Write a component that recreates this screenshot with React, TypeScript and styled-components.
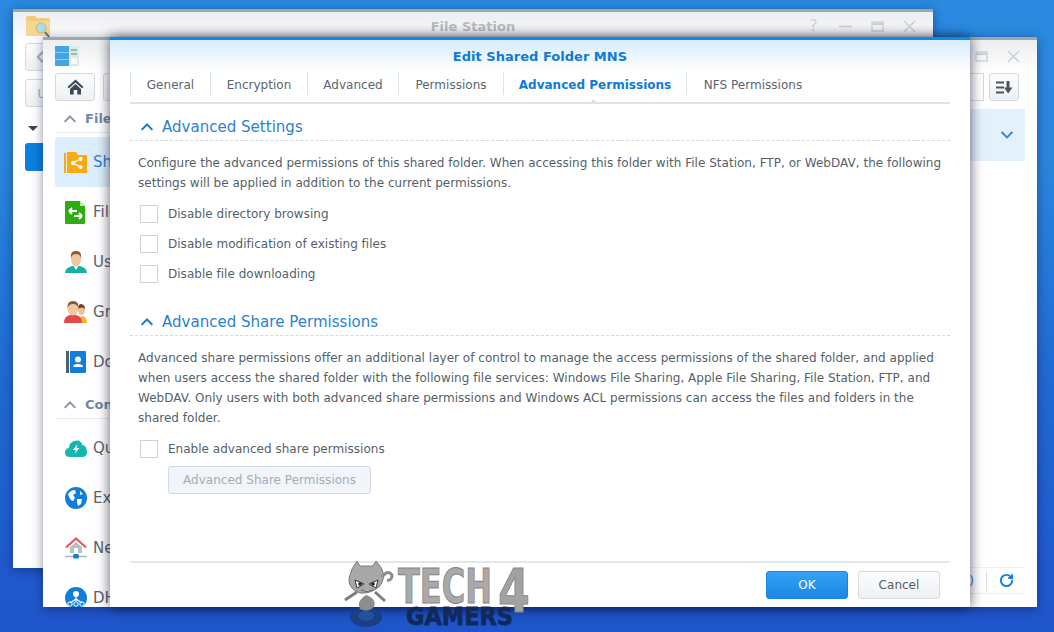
import React from 'react';
import styled, { createGlobalStyle } from 'styled-components';
import { RotateCw, ChevronLeft } from 'lucide-react';

const Global = createGlobalStyle`
  html, body {
    margin: 0;
    padding: 0;
    width: 1054px;
    height: 632px;
    overflow: hidden;
  }
  * { box-sizing: border-box; }
`;

const Desktop = styled.div`
  position: relative;
  width: 1054px;
  height: 632px;
  overflow: hidden;
  background: linear-gradient(180deg, #2a8ae0 0%, #2a86dd 25%, #1f6ad3 60%, #1f55cb 100%);
  font-family: 'DejaVu Sans', Verdana, sans-serif;
  font-size: 12px;
  letter-spacing: 0.02px;
  color: #555f69;
`;

const Window = styled.div<{ $x: number; $y: number; $w: number; $h: number }>`
  position: absolute;
  left: ${(p) => p.$x}px;
  top: ${(p) => p.$y}px;
  width: ${(p) => p.$w}px;
  height: ${(p) => p.$h}px;
  background: #fff;
  border-top: 3px solid #a1a6ab;
  box-shadow: 0 2px 10px rgba(0, 20, 60, 0.45);
  overflow: hidden;
  display: flex;
  flex-direction: column;
`;

const TitleBar = styled.div<{ $compact?: boolean }>`
  height: ${(p) => (p.$compact ? 31 : 32)}px;
  flex-shrink: 0;
  display: flex;
  align-items: center;
  position: relative;
  padding: 0 17px ${(p) => (p.$compact ? 3 : 0)}px 12px;
  background: linear-gradient(180deg, #ebedf0, #ffffff);
`;

const WindowTitle = styled.div`
  position: absolute;
  left: 0;
  right: 0;
  text-align: center;
  font-size: 13px;
  font-weight: bold;
  color: #b9bdc1;
`;

const WindowControls = styled.div`
  margin-left: auto;
  display: flex;
  align-items: center;
  gap: 19px;
  color: #cfd2d5;
`;

const HelpGlyph = styled.span`
  width: 13px;
  text-align: center;
  font-size: 15px;
  line-height: 15px;
`;

const Toolbar = styled.div`
  display: flex;
  align-items: center;
  gap: 8px;
  margin-top: 1px;
  padding: 0 18px 0 12px;
  height: 28px;
`;

const ToolButton = styled.div<{ $w: number }>`
  width: ${(p) => p.$w}px;
  height: 28px;
  flex-shrink: 0;
  display: flex;
  align-items: center;
  justify-content: center;
  border: 1px solid #d3d9df;
  border-radius: 3px;
  background: linear-gradient(180deg, #fbfcfd, #eef1f4);
  color: #aab0b6;
  font-size: 13px;
`;

const SearchBox = styled.div`
  width: 30px;
  height: 28px;
  margin-left: auto;
  margin-right: -3px;
  border: 1px solid #d3d9df;
  background: #fff;
`;

const BackBody = styled.div`
  padding: 0 12px;
  display: flex;
  flex-direction: column;
  gap: 8px;
`;

const Caret = styled.div`
  width: 0;
  height: 0;
  margin: 11px 0 0 3px;
  border-left: 5px solid transparent;
  border-right: 5px solid transparent;
  border-top: 5px solid #444;
`;

const BlueBlock = styled.div`
  width: 60px;
  height: 28px;
  margin-top: 4px;
  border-radius: 3px;
  background: #0c7fe0;
`;

const ManagerBody = styled.div`
  flex: 1;
  min-height: 0;
  display: flex;
`;

const Sidebar = styled.div`
  width: 67px;
  flex-shrink: 0;
  padding-left: 12px;
  overflow: hidden;
`;

const SectionLabel = styled.div`
  width: 200px;
  height: 28px;
  display: flex;
  align-items: center;
  gap: 8px;
  padding-left: 8px;
  margin: 4px 0;
  border-bottom: 1px solid #e8ebee;
  font-size: 13px;
  font-weight: bold;
  color: #6f8aa6;
  white-space: nowrap;
`;

const SideRow = styled.div<{ $active?: boolean }>`
  width: 200px;
  height: 50px;
  display: flex;
  align-items: center;
  gap: 6px;
  padding-left: 9px;
  background: ${(p) => (p.$active ? '#dcedfb' : 'transparent')};
  border-radius: 3px 0 0 3px;
  font-size: 15px;
  color: ${(p) => (p.$active ? '#2b7fd4' : '#5b6570')};
  white-space: nowrap;
`;

const IconSlot = styled.span`
  width: 23px;
  height: 23px;
  flex-shrink: 0;
  display: flex;
  align-items: center;
  justify-content: center;
`;

const ManagerMain = styled.div`
  flex: 1;
  display: flex;
  flex-direction: column;
  padding: 8px 12px 0 0;
`;

const ListRow = styled.div`
  height: 52px;
  display: flex;
  align-items: center;
  justify-content: flex-end;
  padding-right: 11px;
  background: #e3f1fc;
`;

const StatusBar = styled.div`
  margin-top: auto;
  margin-bottom: 13px;
  height: 27px;
  display: flex;
  align-items: center;
  justify-content: flex-end;
  gap: 12px;
  padding-right: 11px;
  border-top: 1px solid #eef0f2;
  border-bottom: 1px solid #eef0f2;
  color: #2b7fd4;
`;

const StatusDivider = styled.div`
  width: 1px;
  height: 20px;
  background: #dfe3e7;
`;

const Dialog = styled.div`
  position: absolute;
  left: 110px;
  top: 37px;
  width: 860px;
  height: 570px;
  padding: 0 20px 8px;
  display: flex;
  flex-direction: column;
  border-top: 3px solid #1089e2;
  background: linear-gradient(180deg, #d6ecfb 0, #ffffff 32px);
  box-shadow: 0 0 12px rgba(0, 5, 30, 0.65);
`;

const DialogTitle = styled.div`
  height: 32px;
  flex-shrink: 0;
  display: flex;
  align-items: center;
  justify-content: center;
  font-size: 13px;
  font-weight: bold;
  color: #0f7bd5;
`;

const Tabs = styled.div`
  height: 32px;
  flex-shrink: 0;
  display: flex;
  padding-bottom: 7px;
  border-bottom: 2px solid #dfe2e5;
  position: relative;
`;

const Tab = styled.div<{ $w: number; $active?: boolean }>`
  width: ${(p) => p.$w}px;
  padding-top: 3px;
  display: flex;
  align-items: center;
  justify-content: center;
  border-left: 1px solid #dfe3e6;
  color: ${(p) => (p.$active ? '#0f7bd5' : '#5b6570')};
  font-weight: ${(p) => (p.$active ? 'bold' : 'normal')};
  white-space: nowrap;
  &:last-of-type {
    border-right: 1px solid #dfe3e6;
  }
`;

const TabNotch = styled.div`
  position: absolute;
  left: 459px;
  bottom: -2px;
  width: 9px;
  height: 5px;
  background: #dfe2e5;
  clip-path: polygon(50% 0, 100% 100%, 0 100%);
`;

const SectionHeader = styled.div<{ $top: number }>`
  height: 30px;
  margin-top: ${(p) => p.$top}px;
  padding: 2px 0 0 10px;
  flex-shrink: 0;
  display: flex;
  align-items: center;
  gap: 8px;
  border-bottom: 1px dashed #d5d9dd;
  font-size: 15px;
  color: #2b7fd4;
`;

const Paragraph = styled.p<{ $after: number }>`
  margin: 12px 0 ${(p) => p.$after}px;
  padding: 0 8px;
  line-height: 20px;
  color: #555f69;
`;

const CheckRow = styled.label`
  height: 30px;
  display: flex;
  align-items: center;
  gap: 10px;
  padding-left: 10px;
`;

const Box = styled.span`
  width: 18px;
  height: 18px;
  border: 1px solid #ccd2d7;
  background: #fff;
`;

const DisabledButton = styled.div`
  width: 203px;
  height: 28px;
  margin: 2px 0 0 38px;
  display: flex;
  align-items: center;
  justify-content: center;
  border: 1px solid #d3dce4;
  border-radius: 3px;
  background: #f1f5f9;
  color: #a5acb3;
`;

const Footer = styled.div`
  margin-top: auto;
  height: 38px;
  flex-shrink: 0;
  display: flex;
  justify-content: flex-end;
  align-items: flex-end;
  gap: 10px;
  padding-right: 10px;
  border-top: 2px solid #e4e6e8;
`;

const ActionButton = styled.div<{ $primary?: boolean }>`
  width: 82px;
  height: 28px;
  display: flex;
  align-items: center;
  justify-content: center;
  border-radius: 3px;
  border: 1px solid ${(p) => (p.$primary ? '#1a84de' : '#d3d9df')};
  background: ${(p) =>
    p.$primary ? 'linear-gradient(180deg, #32a3f5, #1a87e4)' : 'linear-gradient(180deg, #fbfcfd, #eef1f4)'};
  color: ${(p) => (p.$primary ? '#fff' : '#555f69')};
`;

const Watermark = styled.svg`
  position: absolute;
  left: 340px;
  top: 555px;
`;

const Chevron = ({ up = true, color = '#1a78c8', size = 14 }: { up?: boolean; color?: string; size?: number }) => (
  <svg width={size} height={size * 0.7} viewBox="0 0 14 10">
    <path d={up ? 'M1.5 8 L7 2.5 L12.5 8' : 'M1.5 2 L7 7.5 L12.5 2'} fill="none" stroke={color} strokeWidth="2" />
  </svg>
);

const CloseGlyph = () => (
  <svg width="13" height="13" viewBox="0 0 13 13">
    <path d="M1 1 L12 12 M12 1 L1 12" stroke="currentColor" strokeWidth="1.6" />
  </svg>
);

const MinGlyph = () => (
  <svg width="13" height="13" viewBox="0 0 13 13">
    <path d="M0 6.5 H13" stroke="currentColor" strokeWidth="1.6" />
  </svg>
);

const MaxGlyph = () => (
  <svg width="13" height="11" viewBox="0 0 13 11">
    <rect x="1" y="1" width="11" height="9" fill="none" stroke="currentColor" strokeWidth="1.4" />
    <path d="M1 3 H12" stroke="currentColor" strokeWidth="2" />
  </svg>
);

const FolderSearchIcon = () => (
  <svg width="26" height="24" viewBox="0 0 26 24">
    <path d="M1 4 Q1 2 3 2 H10 L12 4 H23 Q25 4 25 6 V22 H1 Z" fill="#f0cb7c" />
    <path d="M1 7 H25 V22 H1 Z" fill="#f6d78f" />
    <circle cx="16" cy="14" r="5" fill="#a9dcef" stroke="#d8b468" strokeWidth="1" />
    <path d="M20 18 L24 23" stroke="#6a6a6a" strokeWidth="2" />
  </svg>
);

const ControlPanelIcon = () => (
  <svg width="24" height="20" viewBox="0 0 24 20">
    <rect x="0" y="0" width="14" height="20" fill="#44a5e5" />
    <path d="M0 6.5 H14 M0 13.5 H14" stroke="#8fcbf0" strokeWidth="1" />
    <rect x="14" y="0" width="10" height="20" fill="#dfe7ea" />
    <path d="M16 4 H22 M16 8 H22" stroke="#6fb7a5" strokeWidth="1.5" />
    <rect x="16" y="12" width="6" height="6" fill="#f8f8f8" />
  </svg>
);

const HomeIcon = () => (
  <svg width="17" height="16" viewBox="0 0 17 16">
    <path d="M8.5 0.5 L0.5 8 L2 9.3 L8.5 3.4 L15 9.3 L16.5 8 Z" fill="#3f4953" />
    <path d="M3 10 L8.5 5 L14 10 V15.5 H10.3 V11 H6.7 V15.5 H3 Z" fill="#3f4953" />
  </svg>
);

const SortIcon = () => (
  <svg width="17" height="13" viewBox="0 0 17 13">
    <path d="M0 1.5 H8 M0 6.5 H8 M0 11.5 H8" stroke="#4b555f" strokeWidth="2" />
    <path d="M12 0 V7" stroke="#4b555f" strokeWidth="3" />
    <path d="M8 6.5 H16.5 L12.2 12.5 Z" fill="#4b555f" />
  </svg>
);

const SharedFolderIcon = () => (
  <svg width="23" height="21" viewBox="0 0 23 21">
    <path d="M0 1 H2 V21 H0 Z M3 0 H12 L14 3 H23 V21 H3 Z" fill="#fba90f" />
    <path d="M9 11 L16 7 M9 11 L16 15" stroke="#fff" strokeWidth="1.4" />
    <circle cx="9" cy="11" r="2.2" fill="#fff" />
    <circle cx="16.5" cy="7" r="2" fill="#fff" />
    <circle cx="16.5" cy="15" r="2" fill="#fff" />
  </svg>
);

const FileServicesIcon = () => (
  <svg width="21" height="23" viewBox="0 0 21 23">
    <path d="M1 0 H15 L20 5 V22 Q20 23 19 23 H1 Q0 23 0 22 V1 Q0 0 1 0 Z" fill="#2ead13" />
    <path d="M15 0 L20 5 H15 Z" fill="#c7ecbb" />
    <path d="M4 10 H12 M4 10 L7 7 M4 10 L7 13 M17 15 H9 M17 15 L14 12 M17 15 L14 18" stroke="#fff" strokeWidth="1.8" fill="none" />
  </svg>
);

const UserIcon = () => (
  <svg width="22" height="22" viewBox="0 0 22 22">
    <path d="M0 22 Q0 17 7 15 H15 Q22 17 22 22 Z" fill="#17b0a5" />
    <path d="M8 14 L11 19 L14 14 Z" fill="#fff" />
    <ellipse cx="11" cy="8" rx="5" ry="7.5" fill="#f2c6a0" />
    <path d="M6 7 Q5 0 11 0 Q17 0 16 7 Q15 3 11 3 Q7 3 6 7 Z" fill="#8a5a34" />
  </svg>
);

const GroupIcon = () => (
  <svg width="23" height="22" viewBox="0 0 23 22">
    <path d="M15 22 Q15 15 19 15 Q23 17 23 22 Z" fill="#f0b429" />
    <ellipse cx="17.5" cy="9" rx="3.5" ry="5" fill="#efc09a" />
    <path d="M14 8 Q14 3 17.5 3 Q21 4 21 8 Q18 5 14 8 Z" fill="#6a4426" />
    <path d="M0 22 Q0 15 6 14 H12 Q18 15 18 22 Z" fill="#e6474c" />
    <ellipse cx="9" cy="7.5" rx="5.5" ry="7" fill="#f2c6a0" />
    <path d="M3.5 7 Q3 0 9 0 Q15 0 14.5 7 Q13 3 9 3 Q5 3 3.5 7 Z" fill="#8a5a34" />
  </svg>
);

const DomainIcon = () => (
  <svg width="20" height="22" viewBox="0 0 20 22">
    <rect x="0" y="0" width="3" height="22" fill="#4c5f70" />
    <rect x="4" y="0" width="16" height="22" rx="1" fill="#0f7fdb" />
    <circle cx="12" cy="8.5" r="3" fill="#fff" />
    <path d="M7 16 Q7 13 12 13 Q17 13 17 16 Z" fill="#fff" />
  </svg>
);

const QuickConnectIcon = () => (
  <svg width="22" height="19" viewBox="0 0 22 19">
    <path d="M5 18 Q0 18 0 13.5 Q0 9.5 4 9 Q4 3.5 9.5 2 Q15 0 17.5 6 Q22 7 22 13 Q22 18 17 18 Z" fill="#13b7b0" />
    <path d="M12.5 5 L8 11 H11 L9.5 15 L14.5 9 H11.5 Z" fill="#fff" />
  </svg>
);

const GlobeIcon = () => (
  <svg width="22" height="22" viewBox="0 0 22 22">
    <circle cx="11" cy="11" r="11" fill="#0f7fdb" />
    <path d="M3 7 Q6 3 10 3 L11 6 L8 8 L10 11 L8 14 L6 13 L4 10 Z M12 12 L17 12 L16 17 L13 19 L12 15 Z M15 4 L18 7 L15 8 Z" fill="#fff" />
  </svg>
);

const NetworkIcon = () => (
  <svg width="22" height="22" viewBox="0 0 22 22">
    <path d="M11 0 L22 10 L20 11 L11 3 L2 11 L0 10 Z" fill="#e9585a" />
    <path d="M5 10 L11 5 L17 10 V16 H5 Z" fill="#b7bfc7" />
    <rect x="9" y="11" width="4" height="5" fill="#fff" />
    <path d="M0 19.5 H22" stroke="#a9b6c2" strokeWidth="1.4" />
    <rect x="8" y="17" width="6" height="4.5" rx="1.5" fill="#0f7fdb" />
  </svg>
);

const DhcpIcon = () => (
  <svg width="22" height="22" viewBox="0 0 22 22">
    <circle cx="11" cy="11" r="11" fill="#0f7fdb" />
    <circle cx="11" cy="7" r="3" fill="#fff" />
    <path d="M11 9 V14 M5 16 L11 12 L17 16" stroke="#fff" strokeWidth="1.2" fill="none" />
    <circle cx="5" cy="17" r="2.2" fill="none" stroke="#fff" />
    <circle cx="11" cy="17" r="2.2" fill="none" stroke="#fff" />
    <circle cx="17" cy="17" r="2.2" fill="none" stroke="#fff" />
  </svg>
);

const sideTop = [
  { label: 'Shared Folder', icon: <SharedFolderIcon />, active: true },
  { label: 'File Services', icon: <FileServicesIcon /> },
  { label: 'User', icon: <UserIcon /> },
  { label: 'Group', icon: <GroupIcon /> },
  { label: 'Domain/LDAP', icon: <DomainIcon /> },
];

const sideBottom = [
  { label: 'QuickConnect', icon: <QuickConnectIcon /> },
  { label: 'External Access', icon: <GlobeIcon /> },
  { label: 'Network', icon: <NetworkIcon /> },
  { label: 'DHCP Server', icon: <DhcpIcon /> },
];

const tabs = [
  { label: 'General', w: 80 },
  { label: 'Encryption', w: 97 },
  { label: 'Advanced', w: 91 },
  { label: 'Permissions', w: 105 },
  { label: 'Advanced Permissions', w: 183, active: true },
  { label: 'NFS Permissions', w: 133 },
];

const App = () => {
  return (
    <Desktop>
      <Global />

      <Window $x={13} $y={9} $w={920} $h={559}>
        <TitleBar $compact>
          <FolderSearchIcon />
          <WindowTitle>File Station</WindowTitle>
          <WindowControls>
            <HelpGlyph>?</HelpGlyph>
            <MinGlyph />
            <MaxGlyph />
            <CloseGlyph />
          </WindowControls>
        </TitleBar>
        <BackBody>
          <ToolButton $w={30}>
            <ChevronLeft size={18} strokeWidth={3} />
          </ToolButton>
          <ToolButton $w={34}>U</ToolButton>
          <Caret />
          <BlueBlock />
        </BackBody>
      </Window>

      <Window $x={43} $y={37} $w={994} $h={570}>
        <TitleBar>
          <ControlPanelIcon />
          <WindowControls>
            <MaxGlyph />
            <CloseGlyph />
          </WindowControls>
        </TitleBar>
        <Toolbar>
          <ToolButton $w={40}>
            <HomeIcon />
          </ToolButton>
          <ToolButton $w={40} />
          <SearchBox />
          <ToolButton $w={30}>
            <SortIcon />
          </ToolButton>
        </Toolbar>
        <ManagerBody>
          <Sidebar>
            <SectionLabel>
              <Chevron color="#8a97a5" />
              File Sharing
            </SectionLabel>
            {sideTop.map((row) => (
              <SideRow key={row.label} $active={row.active}>
                <IconSlot>{row.icon}</IconSlot>
                {row.label}
              </SideRow>
            ))}
            <SectionLabel>
              <Chevron color="#8a97a5" />
              Connectivity
            </SectionLabel>
            {sideBottom.map((row) => (
              <SideRow key={row.label}>
                <IconSlot>{row.icon}</IconSlot>
                {row.label}
              </SideRow>
            ))}
          </Sidebar>
          <ManagerMain>
            <ListRow>
              <Chevron up={false} color="#2b8ad8" />
            </ListRow>
            <StatusBar>
              <span>(s)</span>
              <StatusDivider />
              <RotateCw size={15} strokeWidth={3} color="#1080dc" />
            </StatusBar>
          </ManagerMain>
        </ManagerBody>
      </Window>

      <Dialog>
        <DialogTitle>Edit Shared Folder MNS</DialogTitle>
        <Tabs>
          {tabs.map((tab) => (
            <Tab key={tab.label} $w={tab.w} $active={tab.active}>
              {tab.label}
            </Tab>
          ))}
          <TabNotch />
        </Tabs>

        <SectionHeader $top={7}>
          <Chevron />
          Advanced Settings
        </SectionHeader>
        <Paragraph $after={6}>
          Configure the advanced permissions of this shared folder. When accessing this folder with File Station, FTP,
          or WebDAV, the following settings will be applied in addition to the current permissions.
        </Paragraph>
        <CheckRow>
          <Box />
          Disable directory browsing
        </CheckRow>
        <CheckRow>
          <Box />
          Disable modification of existing files
        </CheckRow>
        <CheckRow>
          <Box />
          Disable file downloading
        </CheckRow>

        <SectionHeader $top={17}>
          <Chevron />
          Advanced Share Permissions
        </SectionHeader>
        <Paragraph $after={6}>
          Advanced share permissions offer an additional layer of control to manage the access permissions of the
          shared folder, and applied when users access the shared folder with the following file services: Windows File
          Sharing, Apple File Sharing, File Station, FTP, and WebDAV. Only users with both advanced share permissions
          and Windows ACL permissions can access the files and folders in the shared folder.
        </Paragraph>
        <CheckRow>
          <Box />
          Enable advanced share permissions
        </CheckRow>
        <DisabledButton>Advanced Share Permissions</DisabledButton>

        <Footer>
          <ActionButton $primary>OK</ActionButton>
          <ActionButton>Cancel</ActionButton>
        </Footer>
      </Dialog>

      <Watermark width="195" height="77" viewBox="0 0 195 77">
        <ellipse cx="26" cy="62" rx="16" ry="10" fill="#1a3f85" />
        <ellipse cx="26" cy="61" rx="8" ry="5" fill="#24509c" />
        <path d="M26 40 Q37 44 34 52 Q28 58 20 54 Q16 46 26 40 Z" fill="#8d8d8d" />
        <path d="M17 37 L5 45 M35 37 L45 46" stroke="#7d7d7d" strokeWidth="3" fill="none" />
        <path d="M12 14 L17 6 L20 11 H33 L36 6 L42 14 Q46 24 39 32 Q30 39 20 38 Q8 34 9 23 Z" fill="#a8a8a8" stroke="#7b7b7b" />
        <path d="M15 25 L24 29 L17 33 Z M38 25 L29 29 L36 33 Z" fill="#fff" stroke="#333" />
        <circle cx="20" cy="29" r="1.8" fill="#222" />
        <circle cx="33" cy="29" r="1.8" fill="#222" />
        <path d="M21 35 Q27 38 33 35" fill="#ddd" stroke="#555" />
        <path d="M42 22 Q48 14 52 20 Q52 26 47 25" fill="none" stroke="#8d8d8d" strokeWidth="3" />
        <text x="58" y="48" fontFamily="'DejaVu Sans', sans-serif" fontWeight="bold" fontSize="48" fill="#a9a9a9" stroke="#858585" textLength="94" lengthAdjust="spacingAndGlyphs">
          TECH
        </text>
        <text x="158" y="57" fontFamily="'DejaVu Sans', sans-serif" fontWeight="bold" fontSize="60" fill="#a2a2a2" stroke="#858585" textLength="32" lengthAdjust="spacingAndGlyphs">
          4
        </text>
        <text x="66" y="70" fontFamily="'DejaVu Sans', sans-serif" fontWeight="bold" fontSize="25" fill="#12295c" stroke="#12295c" strokeWidth="0.8" textLength="107" lengthAdjust="spacingAndGlyphs">
          GAMERS
        </text>
      </Watermark>
    </Desktop>
  );
};

export default App;
